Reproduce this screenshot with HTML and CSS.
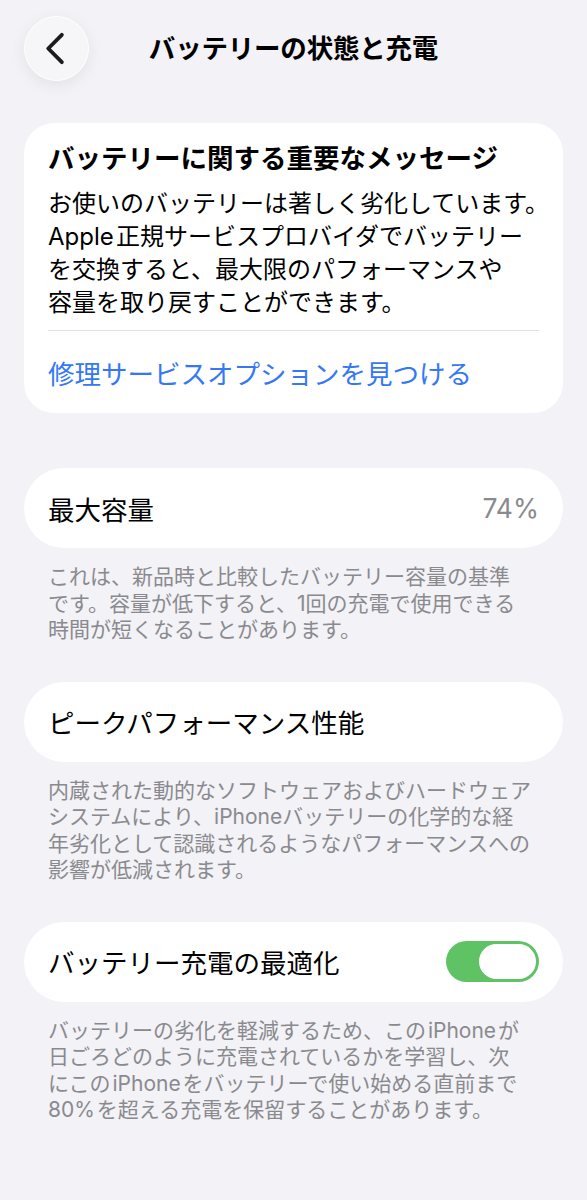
FILE: index.html
```html
<!DOCTYPE html>
<html lang="ja">
<head>
    <meta charset="utf-8">
    <title>バッテリーの状態と充電</title>
    <meta name="viewport" content="width=device-width, initial-scale=1">
    <link rel="stylesheet" href="styles.css">
</head>
<body>
    <header class="nav">
        <button class="back" title="戻る">
            <svg width="65" height="65" viewBox="0 0 65 65">
                <path d="M38 18.5 L24 32.5 L38 46.5" fill="none" stroke="#1c1c1e" stroke-width="4" stroke-linecap="round" stroke-linejoin="round"/>
            </svg>
        </button>
        <h1>バッテリーの状態と充電</h1>
        <span></span>
    </header>

    <main class="content">
        <section class="card notice">
            <h2>バッテリーに関する重要なメッセージ</h2>
            <p>お使いのバッテリーは著しく劣化しています。<br>Apple&#8202;正規サービスプロバイダでバッテリー<br>を交換すると、最大限のパフォーマンスや<br>容量を取り戻すことができます。</p>
            <a class="link" href="#">修理サービスオプションを見つける</a>
        </section>

        <section class="group">
            <div class="card row">
                <span class="label">最大容量</span>
                <span class="value">74%</span>
            </div>
            <p class="footnote">これは、新品時と比較したバッテリー容量の基準<br>です。容量が低下すると、1回の充電で使用できる<br>時間が短くなることがあります。</p>
        </section>

        <section class="group">
            <div class="card row">
                <span class="label">ピークパフォーマンス性能</span>
            </div>
            <p class="footnote">内蔵された動的なソフトウェアおよびハードウェア<br>システムにより、iPhoneバッテリーの化学的な経<br>年劣化として認識されるようなパフォーマンスへの<br>影響が低減されます。</p>
        </section>

        <section class="group">
            <div class="card row">
                <span class="label">バッテリー充電の最適化</span>
                <span class="toggle on"><span class="knob"></span></span>
            </div>
            <p class="footnote">バッテリーの劣化を軽減するため、この&#8202;iPhone&#8202;が<br>日ごろどのように充電されているかを学習し、次<br>にこの&#8202;iPhone&#8202;をバッテリーで使い始める直前まで<br>80%&#8202;を超える充電を保留することがあります。</p>
        </section>
    </main>
</body>
</html>
```

FILE: styles.css
```css
body {
    margin: 0;
    min-height: 100vh;
    background: #f2f2f7;
    font-family: 'Inter', 'Noto Sans CJK JP', sans-serif;
    color: #000;
}
.nav {
    display: grid;
    grid-template-columns: 65px 1fr 65px;
    align-items: center;
    padding: 16px 24px 0 24px;
}
.nav h1 {
    margin: 0;
    font-size: 26.5px;
    font-weight: 700;
    line-height: 65px;
    text-align: center;
    letter-spacing: -0.2px;
}
.back {
    width: 65px;
    height: 65px;
    padding: 0;
    border: 1px solid #fff;
    border-radius: 50%;
    background: #f6f6f8;
    box-shadow: 0 4px 16px rgba(0, 0, 0, 0.07);
    cursor: pointer;
    display: flex;
    align-items: center;
    justify-content: center;
}
.content {
    padding: 42px 24px 40px 24px;
    display: flex;
    flex-direction: column;
}
.card {
    background: #fff;
    border-radius: 30px;
}
.notice {
    padding: 18px 24px 0 24px;
    margin-bottom: 55px;
}
.notice h2 {
    margin: 0 0 12px 0;
    font-size: 26.5px;
    font-weight: 700;
    line-height: 34px;
}
.notice p {
    margin: 0;
    font-size: 24px;
    line-height: 33px;
    white-space: nowrap;
    padding-bottom: 11px;
    border-bottom: 1px solid #e1e1e5;
}
.link {
    display: flex;
    align-items: center;
    height: 82px;
    color: #3478f6;
    font-size: 26.5px;
    text-decoration: none;
}
.group {
    margin-bottom: 38px;
}
.row {
    height: 80px;
    border-radius: 40px;
    padding: 0 24px;
    display: flex;
    align-items: center;
    justify-content: space-between;
}
.label {
    font-size: 26.5px;
}
.value {
    font-size: 26.5px;
    color: #8a8a8e;
}
.footnote {
    margin: 16px 0 0 0;
    padding: 0 24px;
    font-size: 21px;
    line-height: 26.5px;
    white-space: nowrap;
    color: #8a8a8e;
}
.toggle {
    width: 93px;
    height: 41px;
    border-radius: 21px;
    background: #5fc366;
    display: flex;
    align-items: center;
    justify-content: flex-end;
    padding: 0 3px;
    box-sizing: border-box;
}
.toggle .knob {
    width: 57px;
    height: 35px;
    border-radius: 18px;
    background: #fff;
}
```
